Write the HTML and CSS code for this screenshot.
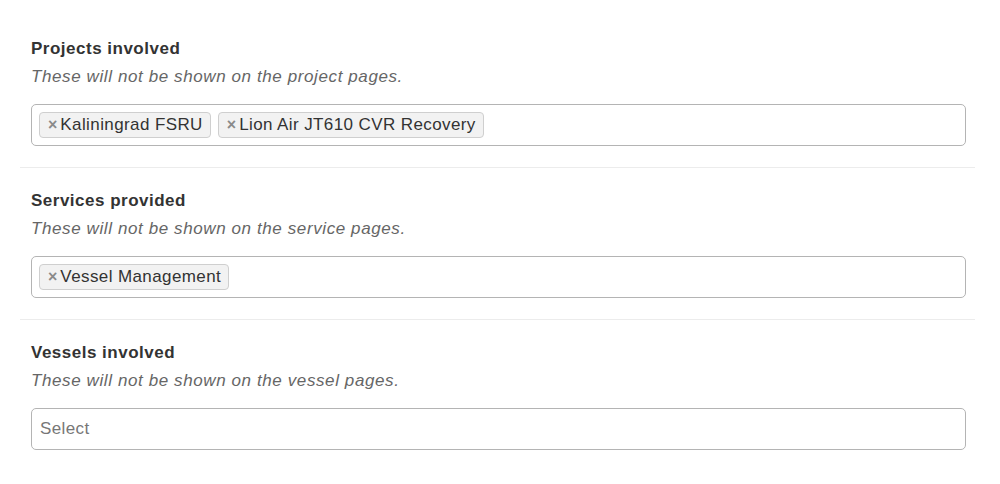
FILE: index.html
```html
<!DOCTYPE html>
<html>
<head>
<meta charset="utf-8">
<link rel="stylesheet" href="styles.css">
</head>
<body>
<div class="form">
  <section class="field">
    <h3 class="label">Projects involved</h3>
    <p class="help">These will not be shown on the project pages.</p>
    <div class="select">
      <span class="tag"><span class="x">×</span>Kaliningrad FSRU</span>
      <span class="tag"><span class="x">×</span>Lion Air JT610 CVR Recovery</span>
    </div>
  </section>
  <section class="field">
    <h3 class="label">Services provided</h3>
    <p class="help">These will not be shown on the service pages.</p>
    <div class="select">
      <span class="tag"><span class="x">×</span>Vessel Management</span>
    </div>
  </section>
  <section class="field last">
    <h3 class="label">Vessels involved</h3>
    <p class="help">These will not be shown on the vessel pages.</p>
    <div class="select">
      <span class="placeholder">Select</span>
    </div>
  </section>
</div>
</body>
</html>
```
FILE: styles.css
```css
html, body {
  margin: 0;
  padding: 0;
  background: #fff;
}
body {
  font-family: "Liberation Sans", Arial, sans-serif;
  color: #333;
}
.form {
  padding: 15px 25px 0 20px;
}
.field {
  padding: 23px 9px 21px 11px;
  border-bottom: 1px solid #ececec;
}
.field + .field {
  padding-top: 22px;
}
.field.last {
  border-bottom: none;
}
.label {
  margin: 0;
  font-size: 17px;
  line-height: 22px;
  font-weight: bold;
  letter-spacing: 0.5px;
  color: #333;
}
.help {
  margin: 6px 0 0;
  font-size: 17px;
  line-height: 22px;
  font-style: italic;
  letter-spacing: 0.6px;
  color: #666;
}
.select {
  margin-top: 16px;
  height: 40px;
  border: 1px solid #b4b4b4;
  border-radius: 5px;
  display: flex;
  align-items: center;
  gap: 7px;
  padding: 0 7px;
}
.tag {
  display: inline-flex;
  align-items: center;
  height: 24px;
  padding: 0 7px 0 8px;
  background: #f2f2f2;
  border: 1px solid #cfcfcf;
  border-radius: 4px;
  font-size: 17px;
  letter-spacing: 0.4px;
  color: #333;
}
.x {
  font-size: 16px;
  font-weight: bold;
  color: #8a8a8a;
  margin-right: 3px;
  letter-spacing: 0;
}
.placeholder {
  font-size: 17px;
  letter-spacing: 0.4px;
  color: #777;
  padding-left: 1px;
}
```
